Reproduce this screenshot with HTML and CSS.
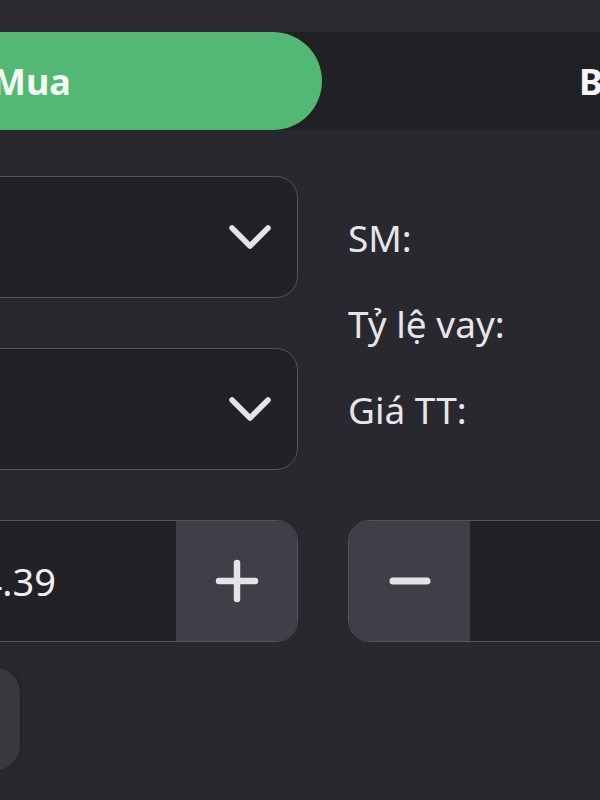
FILE: index.html
```html
<!DOCTYPE html>
<html lang="vi">
<head>
    <meta charset="UTF-8">
    <meta name="viewport" content="width=device-width, initial-scale=1.0">
    <title>Đặt lệnh</title>
    <link rel="stylesheet" href="styles.css">
</head>
<body>
    <div class="screen">
        <div class="topbar"></div>
        <div class="tabs">
            <div class="tab active">Mua</div>
            <div class="tab">Bán</div>
        </div>
        <div class="form">
            <div class="selects">
                <div class="select">
                    <svg class="chevron" width="44" height="30" viewBox="0 0 44 30"><path d="M4 6 L22 24 L40 6" fill="none" stroke="#e4e4e6" stroke-width="5.5" stroke-linecap="round" stroke-linejoin="round"/></svg>
                </div>
                <div class="select">
                    <svg class="chevron" width="44" height="30" viewBox="0 0 44 30"><path d="M4 6 L22 24 L40 6" fill="none" stroke="#e4e4e6" stroke-width="5.5" stroke-linecap="round" stroke-linejoin="round"/></svg>
                </div>
            </div>
            <div class="info">
                <div class="info-row">SM:</div>
                <div class="info-row">Tỷ lệ vay:</div>
                <div class="info-row">Giá TT:</div>
            </div>
            <div class="stepper">
                <div class="stepper-value">24.39</div>
                <div class="stepper-btn">
                    <svg width="44" height="44" viewBox="0 0 44 44"><path d="M22 4 V40 M4 22 H40" stroke="#e4e4e6" stroke-width="6.5" stroke-linecap="round"/></svg>
                </div>
            </div>
            <div class="stepper">
                <div class="stepper-btn">
                    <svg width="44" height="44" viewBox="0 0 44 44"><path d="M5 22 H39" stroke="#e4e4e6" stroke-width="7" stroke-linecap="round"/></svg>
                </div>
                <div class="stepper-value"></div>
            </div>
            <div class="submit"></div>
        </div>
    </div>
</body>
</html>
```

FILE: styles.css
```css
body {
    margin: 0;
    background-color: #29282e;
    font-family: "Noto Sans", "Open Sans", sans-serif;
    color: #e6e6e8;
    overflow: hidden;
}
.screen {
    margin-left: -120px;
    width: 900px;
}
.topbar {
    height: 32px;
    background-color: #2a2930;
}
.tabs {
    display: flex;
    height: 98px;
    background-color: #212025;
}
.tab {
    display: flex;
    align-items: center;
    font-size: 36px;
    font-weight: 700;
    color: #f5f5f5;
}
.tab.active {
    width: 442px;
    padding-left: 112px;
    box-sizing: border-box;
    background-color: #53b874;
    border-radius: 0 49px 49px 0;
    color: #f4fbf4;
}
.tab:last-child {
    padding-left: 257px;
}
.form {
    display: grid;
    grid-template-columns: 418px 1fr;
    column-gap: 50px;
    row-gap: 50px;
    padding-top: 46px;
}
.selects {
    display: flex;
    flex-direction: column;
    gap: 50px;
}
.select {
    height: 122px;
    box-sizing: border-box;
    border: 1.5px solid #55545b;
    border-radius: 22px;
    background-color: #222126;
    display: flex;
    align-items: center;
    justify-content: flex-end;
    padding-right: 25px;
}
.info {
    padding-top: 19px;
}
.info-row {
    font-size: 37px;
    line-height: 86px;
}
.stepper {
    display: flex;
    height: 122px;
    box-sizing: border-box;
    border: 1.5px solid #55545b;
    border-radius: 22px;
    background-color: #222126;
    overflow: hidden;
}
.stepper-value {
    flex: 1;
    display: flex;
    align-items: center;
    justify-content: flex-end;
    padding-right: 120px;
    font-size: 38px;
    color: #f0f0f0;
}
.stepper-btn {
    width: 121px;
    background-color: #403e46;
    display: flex;
    align-items: center;
    justify-content: center;
}
.submit {
    margin-top: -24px;
    width: 140px;
    height: 102px;
    border-radius: 24px;
    background-color: #39383e;
    box-shadow: 0 0 4px rgba(0, 0, 0, 0.35);
}
```
